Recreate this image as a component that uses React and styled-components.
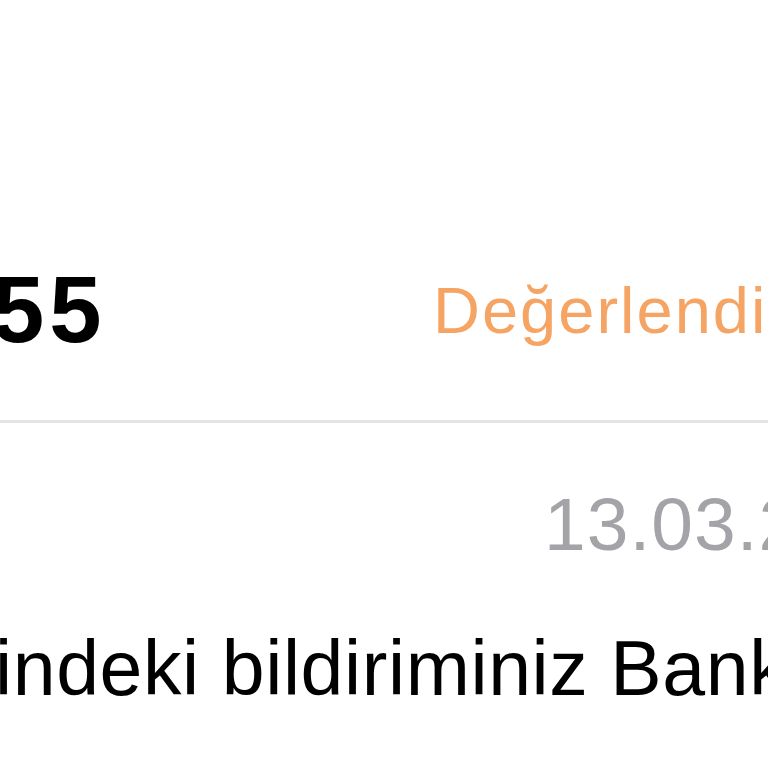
import styled, { createGlobalStyle } from "styled-components";

const GlobalStyle = createGlobalStyle`
  html, body {
    margin: 0;
    padding: 0;
    background: #ffffff;
  }
  body {
    font-family: "Liberation Sans", Arial, sans-serif;
    overflow: hidden;
  }
`;

//styled-component
const Page = styled.main`
  width: 768px;
  height: 768px;
  overflow: hidden;
  background: #ffffff;
`;

const Card = styled.section`
  display: flex;
  flex-direction: column;
  padding-top: 263px;
`;

const Header = styled.header`
  display: grid;
  grid-template-columns: 441px auto;
  align-items: center;
  margin-left: -8px;
`;

const Title = styled.h1`
  margin: 0;
  font-size: 94px;
  line-height: 1;
  font-weight: 700;
  letter-spacing: 5px;
  color: #000000;
  white-space: nowrap;
`;

const Status = styled.span`
  font-size: 65px;
  line-height: 1;
  letter-spacing: 2px;
  color: ${(p) => p.color || "#f5a463"};
  white-space: nowrap;
`;

const Divider = styled.hr`
  margin: 63px 0 0;
  border: 0;
  height: 3px;
  background: #e4e4e7;
  width: 100%;
`;

const Meta = styled.div`
  display: flex;
  padding-left: 544px;
  margin-top: 64px;
`;

const DateText = styled.time`
  font-size: 75px;
  line-height: 1;
  letter-spacing: 1px;
  color: #a3a3a8;
  white-space: nowrap;
`;

const Body = styled.p`
  margin: 68px 0 0 -5px;
  font-size: 77px;
  line-height: 1;
  letter-spacing: 0.6px;
  color: #000000;
  white-space: nowrap;
`;

const App = () => {
  return (
    <Page>
      <GlobalStyle />
      <Card>
        <Header>
          <Title>55</Title>
          <Status>Değerlendirildi</Status>
        </Header>
        <Divider />
        <Meta>
          <DateText>13.03.2024</DateText>
        </Meta>
        <Body>indeki bildiriminiz Bankamıza ulaşmıştır.</Body>
      </Card>
    </Page>
  );
};

export default App;
